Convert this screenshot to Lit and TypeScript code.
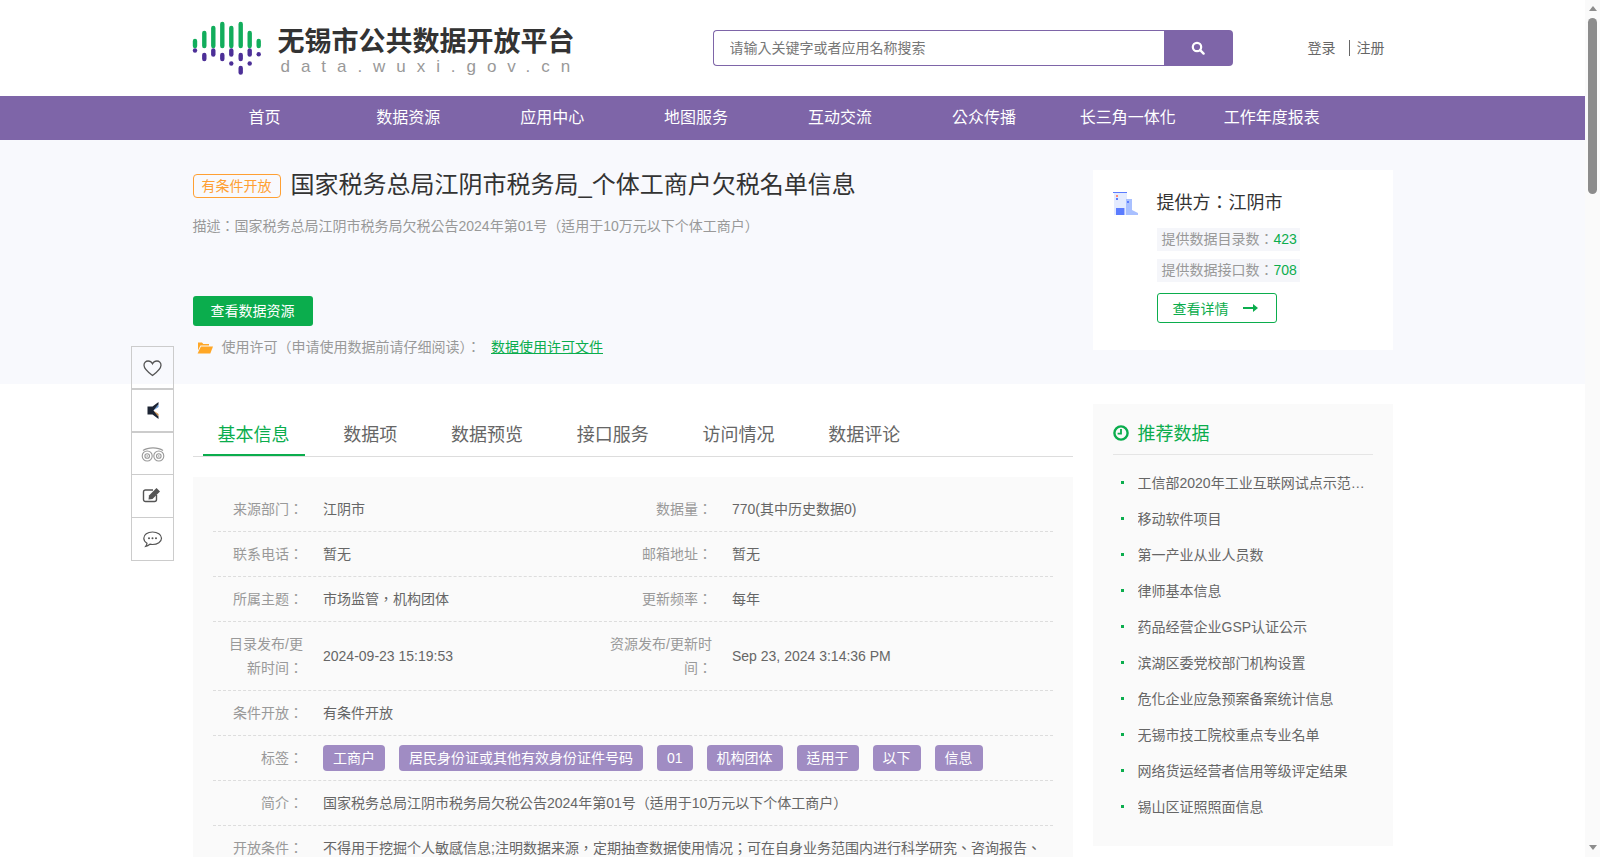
import { LitElement, html, css, svg } from "lit";
import { customElement } from "lit/decorators.js";

const NAV = ["首页", "数据资源", "应用中心", "地图服务", "互动交流", "公众传播", "长三角一体化", "工作年度报表"];
const TABS = ["基本信息", "数据项", "数据预览", "接口服务", "访问情况", "数据评论"];
const TAGS = ["工商户", "居民身份证或其他有效身份证件号码", "01", "机构团体", "适用于", "以下", "信息"];
const RECS = [
  "工信部2020年工业互联网试点示范项目名单",
  "移动软件项目",
  "第一产业从业人员数",
  "律师基本信息",
  "药品经营企业GSP认证公示",
  "滨湖区委党校部门机构设置",
  "危化企业应急预案备案统计信息",
  "无锡市技工院校重点专业名单",
  "网络货运经营者信用等级评定结果",
  "锡山区证照照面信息",
];
const BARS: [number, number, number][] = [
  [5, 19, 28], [14.3, 11, 28], [23.3, 6, 28], [32.3, 2, 28],
  [41.3, 6, 28], [50.7, 2, 28], [59.7, 11, 28], [68.7, 19, 28],
];
const CAPS: [number, number, number][] = [
  [14.3, 33, 41], [23.3, 28.5, 36.5], [32.3, 33, 41], [41.3, 28.5, 36.5],
  [50.7, 33, 41], [59.7, 28.5, 36.5], [50.7, 46, 54.5],
];
const DOTS: [number, number][] = [[5, 30.5], [68.7, 34.3], [41.3, 43.5], [59.7, 43.5]];

@customElement("app-root")
export class AppRoot extends LitElement {
  static styles = css`
    :host {
      display: flex;
      height: 100vh;
      overflow: hidden;
      font-family: "Liberation Sans", "Noto Sans CJK TC", sans-serif;
      font-size: 14px;
      color: #666;
      background: #fff;
    }
    * { box-sizing: border-box; }
    .scroller { flex: 1; min-width: 0; height: 100vh; overflow: hidden; }
    .bar { width: 15px; flex: none; background: #fafafa; display: flex; flex-direction: column; align-items: center; }
    .bar .up { margin-top: 6px; width: 0; height: 0; border: 4.5px solid transparent; border-top: 0; border-bottom: 5px solid #8c8c8c; }
    .bar .thumb { margin-top: 7px; width: 9px; height: 176px; border-radius: 5px; background: #8c8c8c; }
    .bar .down { margin-top: auto; margin-bottom: 7px; width: 0; height: 0; border: 4.5px solid transparent; border-bottom: 0; border-top: 5px solid #8c8c8c; }

    .page { position: relative; }
    .wrap { width: 1200px; margin: 0 auto; }

    .header { height: 96px; }
    .header .wrap { display: flex; align-items: flex-start; height: 96px; }
    .logo { display: flex; width: 520px; padding-top: 20px; }
    .mark { width: 75px; height: 58px; flex: none; margin-left: -3px; }
    .logotext { margin-left: 13px; padding-top: 3px; white-space: nowrap; }
    .logocn { font-size: 27px; line-height: 34px; font-weight: 700; color: #333; font-family: "Noto Sans CJK SC", sans-serif; }
    .logoen { font-size: 17px; line-height: 18px; margin-top: 1px; margin-left: 3px; color: #999; letter-spacing: 10.95px; }
    .search { display: flex; width: 520px; height: 36px; margin-top: 30px; }
    .search input {
      flex: 1; min-width: 0; height: 36px; border: 1px solid #7e65a8; border-right: 0;
      border-radius: 4px 0 0 4px; padding: 0 16px; font: inherit; color: #666; outline: none; background: #fff;
    }
    .search input::placeholder { color: #777; opacity: 1; }
    .search button {
      width: 69px; height: 36px; border: 0; background: #7e65a8; border-radius: 0 4px 4px 0;
      display: flex; align-items: center; justify-content: center; padding: 0;
    }
    .search svg { width: 14px; height: 14px; }
    .auth { display: flex; align-items: center; height: 36px; margin-top: 30px; margin-left: 75px; line-height: 16px; }
    .auth span:first-child { padding-right: 13px; border-right: 1px solid #666; margin-right: 7px; }

    .nav { background: #7e65a8; height: 44px; }
    .nav .wrap { display: flex; }
    .nav a { width: 143.9px; text-align: center; color: #fff; font-size: 16px; line-height: 44px; white-space: nowrap; }

    .hero { background: #f8f9fd; padding: 30px 0 26px; }
    .hero .wrap { display: flex; justify-content: space-between; }
    .titlerow { display: flex; align-items: center; height: 30px; }
    .tag {
      width: 88px; height: 24px; border: 1px solid #ffa033; border-radius: 4px; color: #ffa033;
      line-height: 22px; text-align: center; white-space: nowrap; margin-top: 2px;
    }
    h1 { margin: 0 0 0 10px; font-size: 24px; font-weight: 400; color: #333; line-height: 30px; white-space: nowrap; }
    .desc { margin-top: 16px; line-height: 20px; color: #999; }
    .primary {
      display: block; width: 120px; height: 30px; margin-top: 60px; border-radius: 3px; background: #0bad4d;
      color: #fff; text-align: center; line-height: 30px;
    }
    .license { display: flex; align-items: center; margin-top: 10px; line-height: 22px; color: #999; }
    .license svg { width: 16px; height: 13px; margin-left: 4px; margin-right: 9px; }
    .license a { color: #0bad4d; text-decoration: underline; margin-left: 10.5px; }

    .provider { width: 300px; height: 180px; background: #fff; padding: 22px 20px 0; display: flex; }
    .bld { width: 25px; height: 24px; flex: none; margin-right: 19px; }
    .pname { font-size: 18px; line-height: 24px; color: #333; margin-top: -1px; }
    .chip { display: table; height: 23px; line-height: 23px; padding: 0 3px 0 5px; background: #f5f6fa; color: #999; margin-top: 8px; }
    .pname + .chip { margin-top: 13px; }
    .chip b { font-weight: 400; color: #0bad4d; }
    .detail {
      display: flex; align-items: center; width: 120px; height: 30px; margin-top: 11px; padding-left: 15px;
      border: 1px solid #0bad4d; border-radius: 3px; color: #0bad4d;
    }
    .detail svg { width: 15px; height: 8px; margin-left: 14px; }

    .side { position: absolute; left: 131px; top: 346px; width: 43px; display: flex; flex-direction: column; }
    .side div { height: 43px; border: 1px solid #ccc; border-top-width: 0; display: flex; align-items: center; justify-content: center; }
    .side div:nth-child(-n + 3) { border-top-width: 1px; }
    .side svg { width: 22px; height: 20px; overflow: visible; }

    .main { display: flex; justify-content: space-between; padding-top: 20px; }
    .left { width: 880px; }
    .tabs { display: flex; height: 53px; padding-top: 10px; padding-left: 10px; border-bottom: 1px solid #ddd; }
    .tabs span {
      height: 42px; padding: 0 15px; margin-right: 23.75px; font-size: 18px; line-height: 42px; color: #666; border-bottom: 2px solid transparent;
    }
    .tabs span.on { color: #0bad4d; border-bottom-color: #0bad4d; }
    .panel { margin-top: 20px; background: #fafafa; padding: 10px 20px; }
    .row { display: grid; grid-template-columns: 110.5px 259px 150px 1fr; border-bottom: 1px dashed #ddd; line-height: 24px; }
    .row:last-child { border-bottom: 0; }
    .row > * { padding-top: 10px; padding-bottom: 10px; }
    .label { color: #999; text-align: right; padding-left: 20px; padding-right: 20px; }
    .row.tall { align-items: center; }
    .label.l1 { padding-left: 10.5px; }
    .span { grid-column: span 3; }
    .tags { display: flex; gap: 14px; padding-top: 9px; padding-bottom: 9px; }
    .tags span { height: 26px; line-height: 26px; padding: 0 10px; border-radius: 4px; background: #a08cc3; color: #fff; white-space: nowrap; }

    .right { width: 300px; height: 442px; background: #fafafa; padding: 20px; }
    .rhead { display: flex; align-items: center; height: 30px; padding-bottom: 10px; color: #0bad4d; font-size: 18px; line-height: 20px; }
    .rhead svg { width: 16px; height: 16px; margin-right: 9px; margin-top: -2px; }
    .rule { height: 1px; background: #e5e5e5; }
    ul { list-style: none; margin: 9px 0 0; padding: 0; }
    li { display: flex; align-items: center; height: 36px; }
    li i { width: 3px; height: 3px; background: #0bad4d; margin-left: 8px; margin-right: 14px; flex: none; }
    li span { white-space: nowrap; overflow: hidden; text-overflow: ellipsis; color: #666; width: 230px; }
  `;

  private field(label: string, value: string, tall = false) {
    return html`<div class="label ${tall ? "l1" : ""}">${label}</div><div>${value}</div>`;
  }

  render() {
    return html`
      <div class="scroller">
        <div class="page">
          <div class="header">
            <div class="wrap">
              <div class="logo">
                <svg class="mark" viewBox="0 0 75 58">
                  ${BARS.map(([x, a, b]) => svg`<line x1=${x} x2=${x} y1=${a + 2} y2=${b - 2} stroke="#12ad5c" stroke-width="4.4" stroke-linecap="round"/>`)}
                  ${CAPS.map(([x, a, b]) => svg`<line x1=${x} x2=${x} y1=${a + 2} y2=${b - 2} stroke="#4c2f97" stroke-width="4.4" stroke-linecap="round"/>`)}
                  ${DOTS.map(([x, y]) => svg`<circle cx=${x} cy=${y} r="2.2" fill="#4c2f97"/>`)}
                </svg>
                <div class="logotext">
                  <div class="logocn">无锡市公共数据开放平台</div>
                  <div class="logoen">data.wuxi.gov.cn</div>
                </div>
              </div>
              <div class="search">
                <input placeholder="请输入关键字或者应用名称搜索" />
                <button aria-label="搜索">
                  <svg viewBox="0 0 14 14"><circle cx="6" cy="6" r="4.2" fill="none" stroke="#fff" stroke-width="2.2"/><line x1="9.2" y1="9.2" x2="12.6" y2="12.6" stroke="#fff" stroke-width="2.4" stroke-linecap="round"/></svg>
                </button>
              </div>
              <div class="auth"><span>登录</span><span>注册</span></div>
            </div>
          </div>
          <div class="nav"><div class="wrap">${NAV.map((n) => html`<a>${n}</a>`)}</div></div>
          <div class="hero">
            <div class="wrap">
              <div>
                <div class="titlerow">
                  <div class="tag">有条件开放</div>
                  <h1>国家税务总局江阴市税务局_个体工商户欠税名单信息</h1>
                </div>
                <div class="desc">描述：国家税务总局江阴市税务局欠税公告2024年第01号（适用于10万元以下个体工商户）</div>
                <a class="primary">查看数据资源</a>
                <div class="license">
                  <svg viewBox="0 0 16 13"><path d="M1 1.500h4l1.300 1.500H12v1.600H3.400L1 9.500z" fill="#ffa726"/><path d="M3.900 5.600H16l-2.700 6.900H0.600z" fill="#ffa726"/></svg>
                  <span>使用许可（申请使用数据前请仔细阅读）：</span><a>数据使用许可文件</a>
                </div>
              </div>
              <div class="provider">
                <svg class="bld" viewBox="0 0 25 24">
                  <rect x="1" y="1" width="13" height="22" fill="#e4ebff"/>
                  <rect x="0" y="0" width="14" height="1" fill="#5b7cff"/>
                  <rect x="3" y="3" width="2" height="2" fill="#ff8a7a"/>
                  <rect x="3" y="6" width="2" height="2" fill="#5b7cff"/>
                  <rect x="3" y="16" width="8.400" height="7" fill="#5b7cff"/>
                  <path d="M13 7h6v11l6 3v2H13z" fill="#a9c0ff"/>
                  <rect x="14" y="9" width="2" height="2" fill="#5b7cff"/>
                </svg>
                <div>
                  <div class="pname">提供方：江阴市</div>
                  <div class="chip">提供数据目录数：<b>423</b></div>
                  <div class="chip">提供数据接口数：<b>708</b></div>
                  <a class="detail">查看详情
                    <svg viewBox="0 0 15 8"><path d="M0 3h10V0l5 4-5 4V5H0z" fill="#0bad4d"/></svg>
                  </a>
                </div>
              </div>
            </div>
          </div>
          <div class="wrap main">
            <div class="left">
              <div class="tabs">${TABS.map((t, i) => html`<span class=${i === 0 ? "on" : ""}>${t}</span>`)}</div>
              <div class="panel">
                <div class="row">${this.field("来源部门：", "江阴市")}${this.field("数据量：", "770(其中历史数据0)")}</div>
                <div class="row">${this.field("联系电话：", "暂无")}${this.field("邮箱地址：", "暂无")}</div>
                <div class="row">${this.field("所属主题：", "市场监管，机构团体")}${this.field("更新频率：", "每年")}</div>
                <div class="row tall">${this.field("目录发布/更新时间：", "2024-09-23 15:19:53", true)}${this.field("资源发布/更新时间：", "Sep 23, 2024 3:14:36 PM")}</div>
                <div class="row"><div class="label">条件开放：</div><div class="span">有条件开放</div></div>
                <div class="row"><div class="label">标签：</div><div class="span tags">${TAGS.map((t) => html`<span>${t}</span>`)}</div></div>
                <div class="row"><div class="label">简介：</div><div class="span">国家税务总局江阴市税务局欠税公告2024年第01号（适用于10万元以下个体工商户）</div></div>
                <div class="row"><div class="label">开放条件：</div><div class="span">不得用于挖掘个人敏感信息;注明数据来源，定期抽查数据使用情况；可在自身业务范围内进行科学研究、咨询报告、</div></div>
              </div>
            </div>
            <div class="right">
              <div class="rhead">
                <svg viewBox="0 0 16 16"><circle cx="8" cy="8" r="6.600" fill="none" stroke="#0bad4d" stroke-width="2.400"/><path d="M8 4v4.600H4.600" fill="none" stroke="#0bad4d" stroke-width="1.800"/></svg>
                推荐数据
              </div>
              <div class="rule"></div>
              <ul>${RECS.map((r) => html`<li><i></i><span>${r}</span></li>`)}</ul>
            </div>
          </div>
          <div class="side">
            <div><svg viewBox="0 0 22 20"><path d="M10.500 17.500C4.500 13 2 10.500 2 7.200 2 4.800 3.800 3 6.100 3 7.900 3 9.500 4 10.500 5.800 11.500 4 13.100 3 14.900 3c2.300 0 4.100 1.800 4.100 4.200 0 3.300-2.500 5.800-8.500 10.300z" fill="none" stroke="#555" stroke-width="1.300"/></svg></div>
            <div><svg viewBox="0 0 22 20"><path d="M5.500 5.500h5L16.500 1v2.500l-5 6 5 6V18l-6-4.500h-5z" fill="#1c2433"/><path d="M11.500 9.500l5-6V6z" fill="#5b8fd0"/><path d="M11.500 9.500l5 6V13z" fill="#c98a45"/></svg></div>
            <div><svg viewBox="0 0 22 20"><g fill="none" stroke="#999" stroke-width="1.100"><circle cx="5.200" cy="12" r="5"/><circle cx="16.800" cy="12" r="5"/><circle cx="5.200" cy="12" r="2.300"/><circle cx="16.800" cy="12" r="2.300"/><path d="M1 6.500c5-3.500 15-3.500 20 0"/></g><circle cx="5.200" cy="12" r=".8" fill="#999"/><circle cx="16.800" cy="12" r=".8" fill="#999"/></svg></div>
            <div><svg viewBox="0 0 22 20"><path d="M14.500 9v4.500a2 2 0 0 1-2 2h-9a2 2 0 0 1-2-2V6a2 2 0 0 1 2-2H11" fill="none" stroke="#555" stroke-width="1.400"/><path d="M7 9.500l7.500-7.500 3.500 3.500-7.500 7.500-4 .5z" fill="#555"/></svg></div>
            <div><svg viewBox="0 0 22 20"><path d="M10.500 3c5 0 9 2.800 9 6.300s-4 6.200-9 6.200c-.9 0-1.800-.1-2.600-.3-1.200 1-2.500 1.800-4.200 2.100.8-1 1.200-1.900 1.300-3C3.200 13.200 1.800 11.400 1.800 9.300 1.800 5.800 5.500 3 10.500 3z" fill="none" stroke="#555" stroke-width="1.200"/><circle cx="7" cy="9.300" r="1" fill="#555"/><circle cx="10.500" cy="9.300" r="1" fill="#555"/><circle cx="14" cy="9.300" r="1" fill="#555"/></svg></div>
          </div>
        </div>
      </div>
      <div class="bar"><div class="up"></div><div class="thumb"></div><div class="down"></div></div>
    `;
  }
}
